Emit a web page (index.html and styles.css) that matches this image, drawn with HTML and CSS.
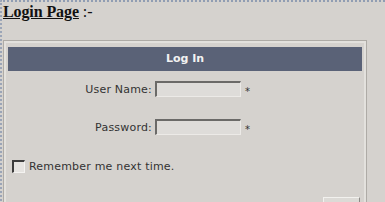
FILE: index.html
```html
<!DOCTYPE html>
<html lang="en">
<head>
  <meta charset="UTF-8" />
  <title>Login Page</title>
  <link rel="stylesheet" href="styles.css">
</head>
<body>
  <div class="page">
    <h1><u>Login Page</u> <span class="sep">:-</span></h1>
    <div class="login-box">
      <div class="title">Log In</div>
      <div class="row">
        <label class="label" for="user">User Name:</label>
        <input class="field" id="user" type="text">
        <span class="req">*</span>
      </div>
      <div class="row row-pass">
        <label class="label" for="pass">Password:</label>
        <input class="field" id="pass" type="password">
        <span class="req">*</span>
      </div>
      <div class="remember">
        <span class="check"></span>
        <span>Remember me next time.</span>
      </div>
      <div class="actions">
        <button class="btn">Log In</button>
      </div>
    </div>
  </div>
</body>
</html>
```

FILE: styles.css
```css
body {
  margin: 0;
  background: #d5d2ce;
  font-family: "DejaVu Sans", Verdana, sans-serif;
  font-size: 11px;
  color: #333;
  overflow: hidden;
}
.page {
  border-top: 2px dotted #909db3;
  border-left: 2px dotted #9ba5b7;
  min-height: 220px;
}
h1 {
  margin: 1px 0 0 1px;
  font-family: "Liberation Serif", "Times New Roman", serif;
  font-size: 16px;
  line-height: 18px;
  color: #111;
  letter-spacing: -0.1px;
}
.sep {
  font-weight: normal;
}
.login-box {
  margin: 19px 0 0 1px;
  width: 364px;
  box-sizing: border-box;
  border: 1px solid #aeaba6;
  box-shadow: inset 0 0 0 2px #e3e1dd;
  padding: 6px 4px 10px 4px;
}
.title {
  height: 24px;
  line-height: 24px;
  background: #5a6277;
  color: #f2f2f2;
  font-weight: bold;
  text-align: center;
}
.row {
  display: flex;
  align-items: center;
  margin-top: 10px;
}
.row-pass {
  margin-top: 22px;
}
.label {
  width: 144px;
  margin-right: 3px;
  text-align: right;
  letter-spacing: 0.2px;
}
.field {
  width: 86px;
  height: 16px;
  box-sizing: border-box;
  margin: 0;
  padding: 0;
  background: #dedcd9;
  border-top: 2px solid #6b6a68;
  border-left: 2px solid #6b6a68;
  border-right: 1px solid #eceae7;
  border-bottom: 1px solid #eceae7;
}
.req {
  margin: 4px 0 0 4px;
  font-size: 10px;
}
.remember {
  display: flex;
  align-items: center;
  margin: 25px 0 0 4px;
  letter-spacing: 0.2px;
}
.check {
  width: 13px;
  height: 13px;
  box-sizing: border-box;
  margin-right: 4px;
  background: #e6e4e1;
  border-top: 2px solid #3c3c3c;
  border-left: 2px solid #3c3c3c;
  border-right: 1px solid #f4f3f1;
  border-bottom: 1px solid #f4f3f1;
}
.actions {
  display: flex;
  justify-content: flex-end;
  margin: 24px 2px 0 0;
}
.btn {
  width: 37px;
  height: 20px;
  padding: 0;
  font-family: "DejaVu Sans", Verdana, sans-serif;
  font-size: 10px;
  color: #333;
  background: #dcdad6;
  border: 1px solid #f2f1ee;
  border-right-color: #8c8a86;
  border-bottom-color: #8c8a86;
}
```
